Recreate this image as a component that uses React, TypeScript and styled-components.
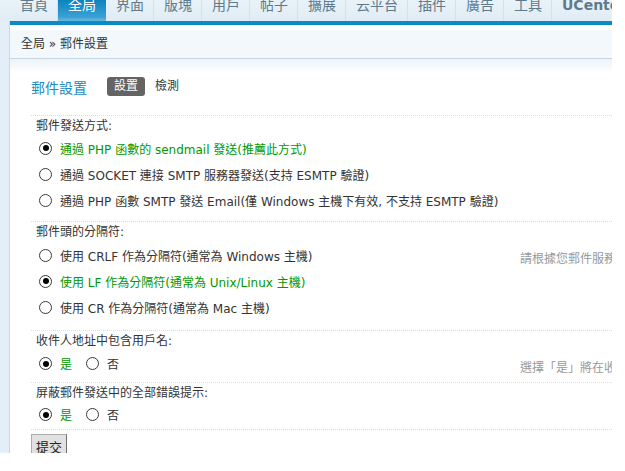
import styled, { createGlobalStyle } from "styled-components";

const GlobalStyle = createGlobalStyle`
    body {
        margin: 0;
        background: #fff;
        font: 12px "DejaVu Sans", "Noto Sans CJK TC", sans-serif;
        color: #333;
    }
`;

const Frame = styled.div`
    width: 612px;
    height: 453px;
    overflow: hidden;
    display: flex;
    flex-direction: column;
`;

const Nav = styled.div`
    height: 21px;
    flex: none;
    display: flex;
    padding-left: 10px;
    background: linear-gradient(#e9f2f9, #e0ecf5);
    overflow: hidden;
    white-space: nowrap;
`;

const Tab = styled.div<{ $active?: boolean; $bold?: boolean }>`
    flex: none;
    padding: 0 9px 0 10px;
    border-right: 1px solid ${(p) => (p.$active ? "transparent" : "#d2e1eb")};
    font-size: 14px;
    line-height: 14px;
    font-weight: ${(p) => (p.$bold ? "bold" : "normal")};
    color: ${(p) => (p.$active ? "#fff" : "#5d7b8c")};
    background: ${(p) => (p.$active ? "linear-gradient(#0c84c1, #3aa0d4 80%, #6bb9e0)" : "transparent")};
    span {
        display: block;
        margin-top: -2px;
    }
`;

const Body = styled.div`
    flex: 1;
    display: flex;
    min-height: 0;
`;

const SideStrip = styled.div`
    width: 10px;
    flex: none;
    background: #e3eef8;
    border-right: 1px solid #c3d8e8;
    box-sizing: border-box;
`;

const Main = styled.div`
    flex: 1;
    display: flex;
    flex-direction: column;
    min-width: 0;
`;

const BlueLine = styled.div`
    flex: none;
    height: 4px;
    background: #0b8bc6;
    margin-bottom: 5px;
`;

const Crumb = styled.div`
    flex: none;
    height: 28px;
    line-height: 29px;
    padding-left: 11px;
    background: #f2f8fc;
    border-bottom: 1px solid #c6d7e3;
    color: #333;
`;

const Content = styled.div`
    flex: 1;
    min-height: 0;
    overflow: hidden;
    padding: 18px 0 0 21px;
    background: linear-gradient(#ecf3f8, #fff 14px);
`;

const TitleRow = styled.div`
    display: flex;
    align-items: center;
    height: 19px;
`;

const Title = styled.h3`
    margin: 0 20px 0 0;
    font-size: 14px;
    font-weight: normal;
    color: #218ac3;
`;

const SubTab = styled.span<{ $on?: boolean }>`
    padding: 0 7px;
    height: 19px;
    line-height: 19px;
    border-radius: 3px;
    margin-right: 3px;
    color: ${(p) => (p.$on ? "#fff" : "#333")};
    background: ${(p) => (p.$on ? "#646464" : "transparent")};
`;

const Form = styled.div`
    margin-top: 19px;
`;

const Section = styled.div`
    border-top: 1px dotted #dcdcdc;
`;

const Label = styled.div`
    height: 21px;
    line-height: 21px;
    padding-left: 5px;
    color: #333;
`;

const Row = styled.div<{ $pad: number }>`
    display: grid;
    grid-template-columns: 489px auto;
    padding-bottom: ${(p) => p.$pad}px;
`;

const OptionList = styled.div<{ $shift: number }>`
    display: flex;
    flex-direction: column;
    margin-top: ${(p) => p.$shift}px;
`;

const Option = styled.label<{ $h: number }>`
    display: flex;
    align-items: center;
    height: ${(p) => p.$h}px;
    padding-left: 8px;
    gap: 8px;
    white-space: nowrap;
`;

const Inline = styled.div<{ $h: number }>`
    display: flex;
    align-items: center;
    height: ${(p) => p.$h}px;
    padding-left: 8px;
`;

const InlineItem = styled.span`
    display: flex;
    align-items: center;
    gap: 8px;
    margin-right: 14px;
`;

const RadioMark = styled.span<{ $checked?: boolean }>`
    width: 13px;
    height: 13px;
    box-sizing: border-box;
    border: 1px solid #3a3a3a;
    border-radius: 50%;
    background: #fff;
    display: inline-flex;
    align-items: center;
    justify-content: center;
    flex: none;
    &::after {
        content: "";
        width: 6px;
        height: 6px;
        border-radius: 50%;
        background: ${(p) => (p.$checked ? "#000" : "transparent")};
    }
`;

const OptText = styled.span<{ $checked?: boolean }>`
    color: ${(p) => (p.$checked ? "#009900" : "#333")};
`;

const Tip = styled.div`
    padding-top: 7px;
    line-height: 18px;
    color: #999;
    white-space: nowrap;
    overflow: hidden;
`;

const SubmitButton = styled.button`
    margin-top: 4px;
    padding: 2px 4px 3px 4px;
    font: 13px "DejaVu Sans", "Noto Sans CJK TC", sans-serif;
    color: #222;
    background: #e1e1e1;
    border: 1px solid #adadad;
    border-right-color: #707070;
    border-radius: 0;
`;

const navTabs = ["首頁", "全局", "界面", "版塊", "用戶", "帖子", "擴展", "云平台", "插件", "廣告", "工具"];

type Group = {
    label: string;
    options: string[];
    checked: number;
    inline?: boolean;
    tip?: string;
    pad: number;
    h: number;
    shift?: number;
};

const groups: Group[] = [
    {
        label: "郵件發送方式:",
        options: [
            "通過 PHP 函數的 sendmail 發送(推薦此方式)",
            "通過 SOCKET 連接 SMTP 服務器發送(支持 ESMTP 驗證)",
            "通過 PHP 函數 SMTP 發送 Email(僅 Windows 主機下有效, 不支持 ESMTP 驗證)",
        ],
        checked: 0,
        pad: 8,
        h: 26,
        shift: -2,
    },
    {
        label: "郵件頭的分隔符:",
        options: [
            "使用 CRLF 作為分隔符(通常為 Windows 主機)",
            "使用 LF 作為分隔符(通常為 Unix/Linux 主機)",
            "使用 CR 作為分隔符(通常為 Mac 主機)",
        ],
        checked: 1,
        tip: "請根據您郵件服務器的設置選擇適當的分隔符",
        pad: 10,
        h: 26,
        shift: -1,
    },
    {
        label: "收件人地址中包含用戶名:",
        options: ["是", "否"],
        checked: 0,
        inline: true,
        tip: "選擇「是」將在收件人地址中包含論壇用戶名",
        pad: 5,
        h: 23,
    },
    {
        label: "屏蔽郵件發送中的全部錯誤提示:",
        options: ["是", "否"],
        checked: 0,
        inline: true,
        pad: 4,
        h: 21,
    },
];

function App() {
    return (
        <>
            <GlobalStyle />
            <Frame>
                <Nav>
                    {navTabs.map((t) => (
                        <Tab key={t} $active={t === "全局"}>
                            <span>{t}</span>
                        </Tab>
                    ))}
                    <Tab $bold>
                        <span>UCenter</span>
                    </Tab>
                </Nav>
                <Body>
                    <SideStrip />
                    <Main>
                        <BlueLine />
                        <Crumb>全局 » 郵件設置</Crumb>
                        <Content>
                            <TitleRow>
                                <Title>郵件設置</Title>
                                <SubTab $on>設置</SubTab>
                                <SubTab>檢測</SubTab>
                            </TitleRow>
                            <Form>
                                {groups.map((g) => (
                                    <Section key={g.label}>
                                        <Label>{g.label}</Label>
                                        <Row $pad={g.pad}>
                                            {g.inline ? (
                                                <Inline $h={g.h}>
                                                    {g.options.map((o, i) => (
                                                        <InlineItem key={o}>
                                                            <RadioMark $checked={i === g.checked} />
                                                            <OptText $checked={i === g.checked}>{o}</OptText>
                                                        </InlineItem>
                                                    ))}
                                                </Inline>
                                            ) : (
                                                <OptionList $shift={g.shift ?? 0}>
                                                    {g.options.map((o, i) => (
                                                        <Option key={o} $h={g.h}>
                                                            <RadioMark $checked={i === g.checked} />
                                                            <OptText $checked={i === g.checked}>{o}</OptText>
                                                        </Option>
                                                    ))}
                                                </OptionList>
                                            )}
                                            {g.tip && <Tip>{g.tip}</Tip>}
                                        </Row>
                                    </Section>
                                ))}
                                <Section>
                                    <SubmitButton>提交</SubmitButton>
                                </Section>
                            </Form>
                        </Content>
                    </Main>
                </Body>
            </Frame>
        </>
    );
}

export default App;
